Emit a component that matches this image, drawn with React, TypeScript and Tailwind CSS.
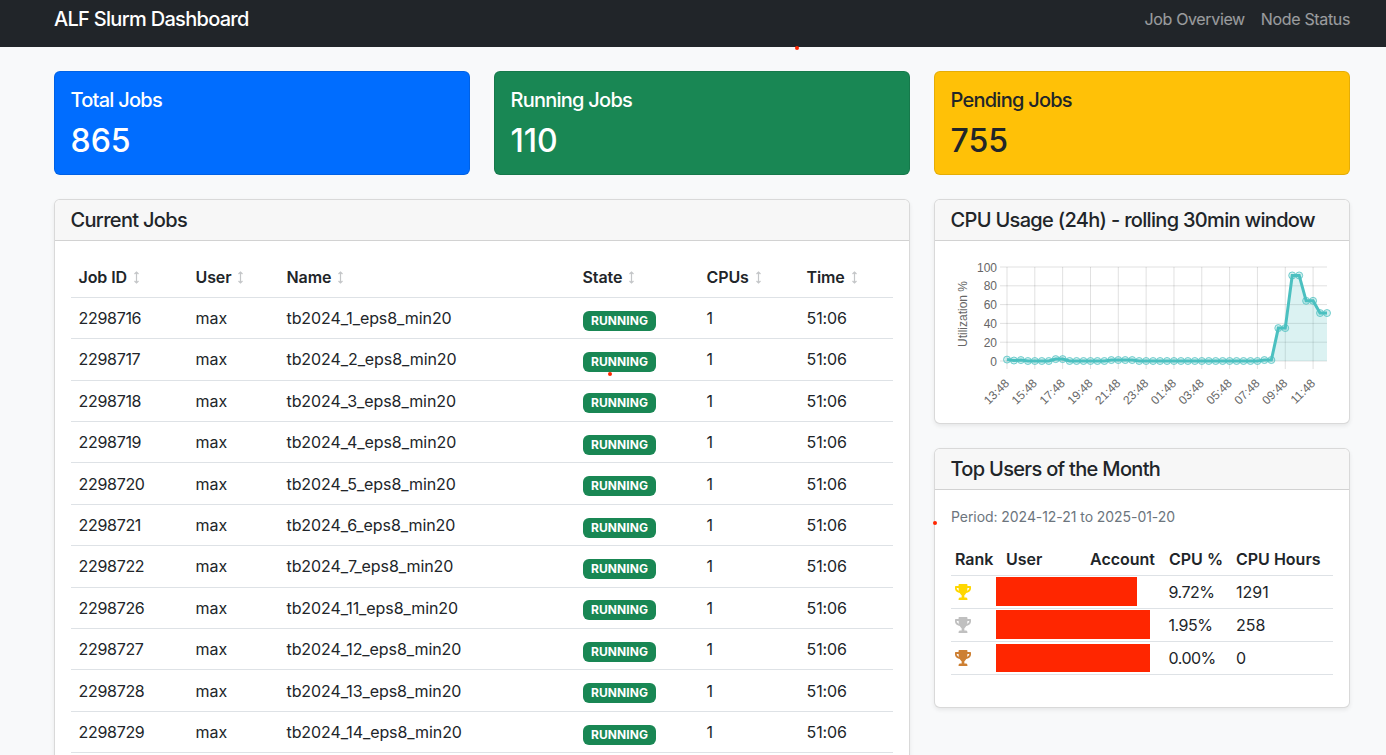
import { FaTrophy } from "react-icons/fa";

const jobs = [
  ["2298716", "tb2024_1_eps8_min20"],
  ["2298717", "tb2024_2_eps8_min20"],
  ["2298718", "tb2024_3_eps8_min20"],
  ["2298719", "tb2024_4_eps8_min20"],
  ["2298720", "tb2024_5_eps8_min20"],
  ["2298721", "tb2024_6_eps8_min20"],
  ["2298722", "tb2024_7_eps8_min20"],
  ["2298726", "tb2024_11_eps8_min20"],
  ["2298727", "tb2024_12_eps8_min20"],
  ["2298728", "tb2024_13_eps8_min20"],
  ["2298729", "tb2024_14_eps8_min20"],
];

const values = [
  1.5, 0.5, 1, 0, 0, 0, 0, 2, 2, 0, 0, 0, 0, 0, 0, 1, 1, 1, 1, 0, 0, 0, 0, 0, 0, 0, 0, 0, 0, 0, 0, 0, 0, 0, 0, 0, 0,
  1, 1, 35, 35, 91, 91, 64, 64, 51, 51,
];
const labels = ["13:48", "15:48", "17:48", "19:48", "21:48", "23:48", "01:48", "03:48", "05:48", "07:48", "09:48", "11:48"];

function Chart() {
  const x0 = 56;
  const x1 = 376;
  const y0 = 104;
  const y100 = 10;
  const px = (i: number) => x0 + ((x1 - x0) * i) / 46;
  const py = (v: number) => y0 - ((y0 - y100) * v) / 100;
  const line = values.map((v, i) => `${px(i)},${py(v)}`).join(" ");
  return (
    <svg width="382" height="150" className="block">
      {[0, 20, 40, 60, 80, 100].map((v) => (
        <g key={v}>
          <line x1={x0 - 7} x2={x1} y1={py(v)} y2={py(v)} stroke="rgba(0,0,0,0.12)" />
          <text x={x0 - 10} y={py(v) + 4.5} textAnchor="end" fontSize="12" fill="#666" fontFamily="Liberation Sans">
            {v}
          </text>
        </g>
      ))}
      {labels.map((l, i) => {
        const x = px(i * 4);
        return (
          <g key={l}>
            <line x1={x} x2={x} y1={y100} y2={y0 + 8} stroke="rgba(0,0,0,0.12)" />
            <text
              x={x + 3}
              y={y0 + 23}
              textAnchor="end"
              fontSize="12"
              fill="#666"
              fontFamily="Liberation Sans"
              transform={`rotate(-45 ${x + 3} ${y0 + 23})`}
            >
              {l}
            </text>
          </g>
        );
      })}
      <text
        x="16"
        y="57"
        textAnchor="middle"
        fontSize="12"
        fill="#666"
        fontFamily="Liberation Sans"
        transform="rotate(-90 16 57)"
      >
        Utilization %
      </text>
      <polygon points={`${x0},${y0} ${line} ${x1},${y0}`} fill="rgba(75,192,192,0.2)" />
      <polyline points={line} fill="none" stroke="#4bc0c0" strokeWidth="3" />
      {values.map((v, i) => (
        <circle key={i} cx={px(i)} cy={py(v)} r="3.5" fill="rgba(75,192,192,0.25)" stroke="#4bc0c0" strokeOpacity="0.75" strokeWidth="1" />
      ))}
    </svg>
  );
}

function Sort() {
  return (
    <svg width="7" height="13" viewBox="0 0 7 13" className="ml-[6px] inline-block align-[-1px]" fill="none" stroke="#c4c6c8" strokeWidth="1.2">
      <path d="M3.5 1V12M1.5 3L3.5 1L5.5 3M1.5 10L3.5 12L5.5 10" />
    </svg>
  );
}

function StatCard({ title, value, cls }: { title: string; value: string; cls: string }) {
  return (
    <div className={`h-[104px] rounded-[6px] border border-black/10 px-4 pt-4 ${cls}`}>
      <div className="-ml-[0.5px] text-[20px] leading-[24px] font-medium tracking-[-0.75px]">{title}</div>
      <div className="mt-[10px] -ml-[0.5px] text-[32px] leading-[38px] font-medium">{value}</div>
    </div>
  );
}

function Card({ title, children, className }: { title: string; children: React.ReactNode; className?: string }) {
  return (
    <div className={`rounded-[6px] border border-black/15 bg-white shadow-[0_2px_4px_rgba(0,0,0,0.075)] ${className ?? ""}`}>
      <div className="h-[41px] rounded-t-[5px] border-b border-black/15 bg-[#f7f7f7] pt-[8px] pr-4 pl-[15.5px] text-[20px] leading-[24px] font-medium tracking-[-0.68px] whitespace-nowrap text-[#212529]">
        {title}
      </div>
      {children}
    </div>
  );
}

const trophies = [
  { color: "text-[#ffd700]", pct: "9.72%", hours: "1291", box: "h-[29px] w-[141px]" },
  { color: "text-[#c0c0c0]", pct: "1.95%", hours: "258", box: "h-[29px] w-[154px]" },
  { color: "text-[#cd7f32]", pct: "0.00%", hours: "0", box: "h-[28px] w-[154px]" },
];

export default function App() {
  return (
    <div className="relative h-screen overflow-hidden bg-[#f8f9fa] font-['Inter','Liberation_Sans',sans-serif] text-[16px] text-[#212529]">
      <nav className="flex h-[47px] items-start justify-between bg-[#212529] pt-[7px] pr-[36px] pl-[54px]">
        <div className="text-[20px] leading-[24px] font-medium tracking-[-0.7px] text-white">ALF Slurm Dashboard</div>
        <div className="flex gap-4 leading-[24px] tracking-[-0.35px] text-white/55">
          <span>Job Overview</span>
          <span>Node Status</span>
        </div>
      </nav>

      <main className="mr-[36px] ml-[54px]">
        <div className="mt-6 grid grid-cols-3 gap-6">
          <StatCard title="Total Jobs" value="865" cls="bg-[#006dff] text-white" />
          <StatCard title="Running Jobs" value="110" cls="bg-[#198754] text-white" />
          <StatCard title="Pending Jobs" value="755" cls="bg-[#ffc107] text-[#212529]" />
        </div>

        <div className="mt-6 grid grid-cols-[856px_416px] gap-6">
          <Card title="Current Jobs" className="h-[800px]">
            <div className="p-4">
              <table className="w-[822px] table-fixed border-collapse">
                <colgroup>
                  <col className="w-[117px]" />
                  <col className="w-[91px]" />
                  <col className="w-[296px]" />
                  <col className="w-[124px]" />
                  <col className="w-[100px]" />
                  <col className="w-[94px]" />
                </colgroup>
                <thead>
                  <tr className="h-[40.4px] border-b border-[#dee2e6] text-left">
                    {["Job ID", "User", "Name", "State", "CPUs", "Time"].map((h) => (
                      <th key={h} className="py-0 pr-2 pl-[7.5px] font-semibold tracking-[-0.1px]">
                        {h}
                        <Sort />
                      </th>
                    ))}
                  </tr>
                </thead>
                <tbody>
                  {jobs.map(([id, name]) => (
                    <tr key={id} className="h-[41.4px] border-b border-[#dee2e6]">
                      <td className="py-0 pr-2 pl-[7.5px] tracking-[-0.3px]">{id}</td>
                      <td className="py-0 pr-2 pl-[7.5px]">max</td>
                      <td className="py-0 pr-2 pl-[7.5px] tracking-[-0.08px]">{name}</td>
                      <td className="px-2">
                        <span className="inline-block h-[20px] w-[73px] translate-y-px rounded-[6px] bg-[#198754] text-center align-middle text-[12px] leading-[20px] font-bold tracking-[0.1px] text-white">
                          RUNNING
                        </span>
                      </td>
                      <td className="py-0 pr-2 pl-[7.5px]">1</td>
                      <td className="py-0 pr-2 pl-[7.5px] tracking-[-0.1px]">51:06</td>
                    </tr>
                  ))}
                </tbody>
              </table>
            </div>
          </Card>

          <div className="flex flex-col gap-6">
            <Card title="CPU Usage (24h) - rolling 30min window" className="h-[225px]">
              <div className="p-4">
                <Chart />
              </div>
            </Card>
            <Card title="Top Users of the Month" className="h-[260px]">
              <div className="px-4 pt-4">
                <p className="mb-4 text-[14px] leading-[21px] tracking-[-0.06px] text-[#6c757d]">Period: 2024-12-21 to 2025-01-20</p>
                <table className="w-[382px] table-fixed border-collapse">
                  <colgroup>
                    <col className="w-[51px]" />
                    <col className="w-[84px]" />
                    <col className="w-[79px]" />
                    <col className="w-[67px]" />
                    <col className="w-[101px]" />
                  </colgroup>
                  <thead>
                    <tr className="h-[32px] border-b border-[#dee2e6] text-left">
                      {["Rank", "User", "Account", "CPU %", "CPU Hours"].map((h) => (
                        <th key={h} className="px-1 font-semibold whitespace-nowrap">
                          {h}
                        </th>
                      ))}
                    </tr>
                  </thead>
                  <tbody>
                    {trophies.map((t) => (
                      <tr key={t.pct} className="h-[33px] border-b border-[#dee2e6]">
                        <td className="px-1">
                          <FaTrophy preserveAspectRatio="none" className={`h-4 w-4 ${t.color}`} />
                        </td>
                        <td colSpan={2} className="p-0">
                          <div className={`-ml-[6px] bg-[#ff2600] ${t.box}`} />
                        </td>
                        <td className="py-0 pr-1 pl-[3.5px] tracking-[-0.5px]">{t.pct}</td>
                        <td className="px-1">{t.hours}</td>
                      </tr>
                    ))}
                  </tbody>
                </table>
              </div>
            </Card>
          </div>
        </div>
      </main>

      <span className="absolute top-[46px] left-[795px] h-1 w-1 rounded-full bg-[#ff2600]" />
      <span className="absolute top-[372px] left-[608px] h-1 w-1 rounded-full bg-[#ff2600]" />
      <span className="absolute top-[521px] left-[933px] h-1 w-1 rounded-full bg-[#ff2600]" />
    </div>
  );
}
